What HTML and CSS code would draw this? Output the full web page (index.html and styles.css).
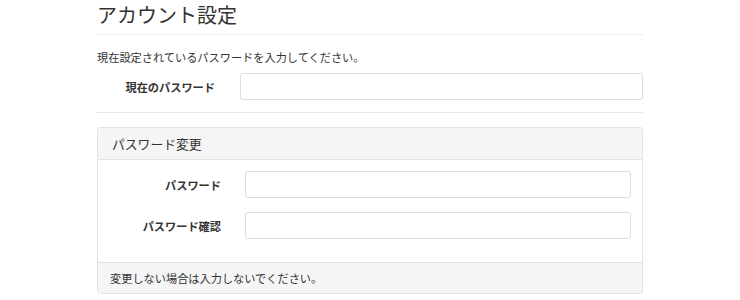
FILE: index.html
```html
<!DOCTYPE html>
<html lang="ja">
<head>
    <meta charset="UTF-8">
    <meta name="viewport" content="width=device-width, initial-scale=1.0">
    <title>アカウント設定</title>
    <link rel="stylesheet" href="styles.css">
</head>
<body>

<div class="page">
    <h1 class="page-title">アカウント設定</h1>

    <form id="accountForm">
        <p class="help">現在設定されているパスワードを入力してください。</p>
        <div class="form-row">
            <label for="currentPassword">現在のパスワード</label>
            <input type="password" id="currentPassword">
        </div>

        <hr>

        <div class="panel">
            <div class="panel-heading">パスワード変更</div>
            <div class="panel-body">
                <div class="form-row">
                    <label for="password">パスワード</label>
                    <input type="password" id="password">
                </div>
                <div class="form-row">
                    <label for="passwordConfirm">パスワード確認</label>
                    <input type="password" id="passwordConfirm">
                </div>
            </div>
            <div class="panel-footer">変更しない場合は入力しないでください。</div>
        </div>
    </form>
</div>

</body>
</html>
```

FILE: styles.css
```css
body {
    margin: 0;
    font-family: "Noto Sans CJK JP", "Liberation Sans", sans-serif;
    font-size: 11.2px;
    color: #333;
    background-color: #fff;
}
.page {
    width: 546px;
    margin: 0 auto;
}
.page-title {
    margin: 0;
    padding: 4px 0 8px;
    font-size: 20px;
    line-height: 22px;
    font-weight: normal;
    border-bottom: 1px solid #eee;
}
.help {
    margin: 14px 0 8px;
    line-height: 16px;
}
.form-row {
    display: flex;
    align-items: center;
    gap: 25px;
}
.form-row label {
    width: 118px;
    text-align: right;
    font-weight: bold;
}
.form-row input {
    flex: 1;
    box-sizing: border-box;
    height: 27px;
    margin: 0;
    padding: 4px 9px;
    border: 1px solid #ddd;
    border-radius: 3px;
    font: inherit;
}
hr {
    margin: 12px 0 14px;
    border: 0;
    border-top: 1px solid #e6e6e6;
}
.panel {
    border: 1px solid #e3e3e3;
    border-radius: 3px;
}
.panel-heading {
    height: 31px;
    padding: 0 14px;
    line-height: 31px;
    font-size: 12.8px;
    background-color: #f5f5f5;
    border-bottom: 1px solid #e3e3e3;
    border-radius: 3px 3px 0 0;
}
.panel-body {
    display: flex;
    flex-direction: column;
    gap: 14px;
    padding: 11px 11px 23px 0;
}
.panel-body .form-row {
    gap: 24px;
}
.panel-body .form-row label {
    width: 123px;
}
.panel-footer {
    height: 30px;
    padding: 0 12px;
    line-height: 30px;
    background-color: #f5f5f5;
    border-top: 1px solid #e3e3e3;
    border-radius: 0 0 3px 3px;
}
```
